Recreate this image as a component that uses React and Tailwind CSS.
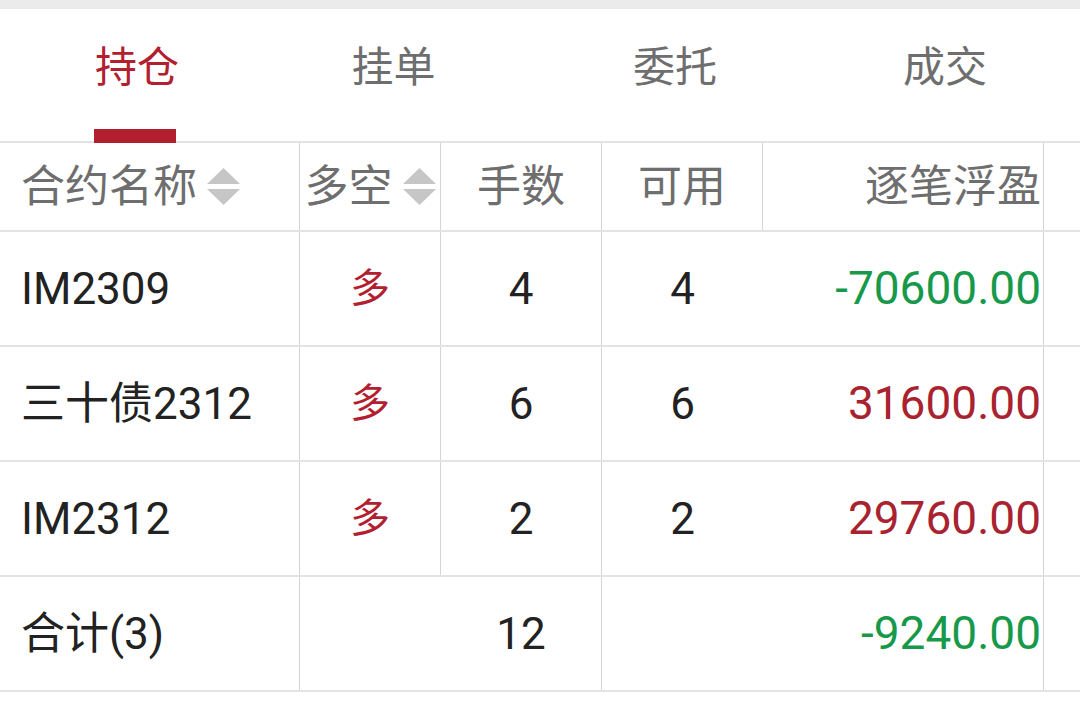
import React from "react";

const FONT = { fontFamily: '"Roboto", "Noto Sans CJK SC", sans-serif' };

function SortIcon() {
  return (
    <svg width="33" height="37" viewBox="0 0 33 37" className="ml-[10px] shrink-0">
      <polygon points="16.5,0 33,16 0,16" fill="#c6c6c6" />
      <polygon points="0,21 33,21 16.5,37" fill="#c6c6c6" />
    </svg>
  );
}

const rows = [
  { name: "IM2309", dir: "多", qty: "4", avail: "4", pnl: "-70600.00", neg: true },
  { name: "三十债2312", dir: "多", qty: "6", avail: "6", pnl: "31600.00", neg: false },
  { name: "IM2312", dir: "多", qty: "2", avail: "2", pnl: "29760.00", neg: false },
];

const tabPad = ["pl-[4px]", "pr-[23px]", "pl-[0px]", "pl-[0px]"];

export default function App() {
  const tabs = ["持仓", "挂单", "委托", "成交"];
  return (
    <div className="w-[1080px] h-[707px] bg-white overflow-hidden" style={FONT}>
      <div className="h-[9px] bg-[#ebebeb]" />
      {/* Tabs */}
      <div className="flex h-[134px] border-b-2 border-[#e3e3e3]">
        {tabs.map((t, i) => (
          <div
            key={t}
            className={
              "relative w-[270px] shrink-0 flex items-center justify-center pb-[15px] text-[42px] " +
              (i === 0 ? "text-[#b22030] " : "text-[#6e6e6e] ") +
              tabPad[i]
            }
          >
            <span>{t}</span>
            {i === 0 && (
              <div className="absolute bottom-[-2px] left-[94px] w-[82px] h-[14px] bg-[#b22030]" />
            )}
          </div>
        ))}
      </div>
      {/* Header */}
      <div className="flex h-[89px] border-b-2 border-[#e3e3e3] text-[44px] text-[#6e6e6e]">
        <div className="w-[300px] shrink-0 flex items-center pl-[21px] border-r border-[#d4d4d4]">
          <span>合约名称</span>
          <SortIcon />
        </div>
        <div className="w-[141px] shrink-0 flex items-center justify-center border-r border-[#d4d4d4]">
          <span>多空</span>
          <SortIcon />
        </div>
        <div className="w-[161px] shrink-0 flex items-center justify-center border-r border-[#d4d4d4]">
          手数
        </div>
        <div className="w-[161px] shrink-0 flex items-center justify-center border-r border-[#d4d4d4]">
          可用
        </div>
        <div className="w-[281px] shrink-0 flex items-center justify-end pr-[2px] border-r border-[#d4d4d4]">
          逐笔浮盈
        </div>
        <div className="flex-1" />
      </div>
      {/* Rows */}
      {rows.map((r) => (
        <div key={r.name} className="flex h-[115px] border-b-2 border-[#e3e3e3] text-[44px] text-[#222222]">
          <div className="w-[300px] shrink-0 flex items-center pl-[21px] border-r border-[#d4d4d4]">
            {r.name}
          </div>
          <div className="w-[141px] shrink-0 flex items-center justify-center border-r border-[#d4d4d4] text-[#b22030] text-[40px]">
            {r.dir}
          </div>
          <div className="w-[161px] shrink-0 flex items-center justify-center border-r border-[#d4d4d4]">
            {r.qty}
          </div>
          <div className="w-[161px] shrink-0 flex items-center justify-center">{r.avail}</div>
          <div
            className={
              "w-[281px] shrink-0 flex items-center justify-end pr-[2px] border-r border-[#d4d4d4] text-[46px] " +
              (r.neg ? "text-[#16994a]" : "text-[#a8232f]")
            }
          >
            {r.pnl}
          </div>
          <div className="flex-1" />
        </div>
      ))}
      {/* Total */}
      <div className="flex h-[115px] border-b-2 border-[#e3e3e3] text-[44px] text-[#222222]">
        <div className="w-[300px] shrink-0 flex items-center pl-[21px] border-r border-[#d4d4d4]">合计(3)</div>
        <div className="w-[141px] shrink-0" />
        <div className="w-[161px] shrink-0 flex items-center justify-center border-r border-[#d4d4d4]">12</div>
        <div className="w-[161px] shrink-0" />
        <div className="w-[281px] shrink-0 flex items-center justify-end pr-[2px] border-r border-[#d4d4d4] text-[46px] text-[#16994a]">
          -9240.00
        </div>
        <div className="flex-1" />
      </div>
    </div>
  );
}
